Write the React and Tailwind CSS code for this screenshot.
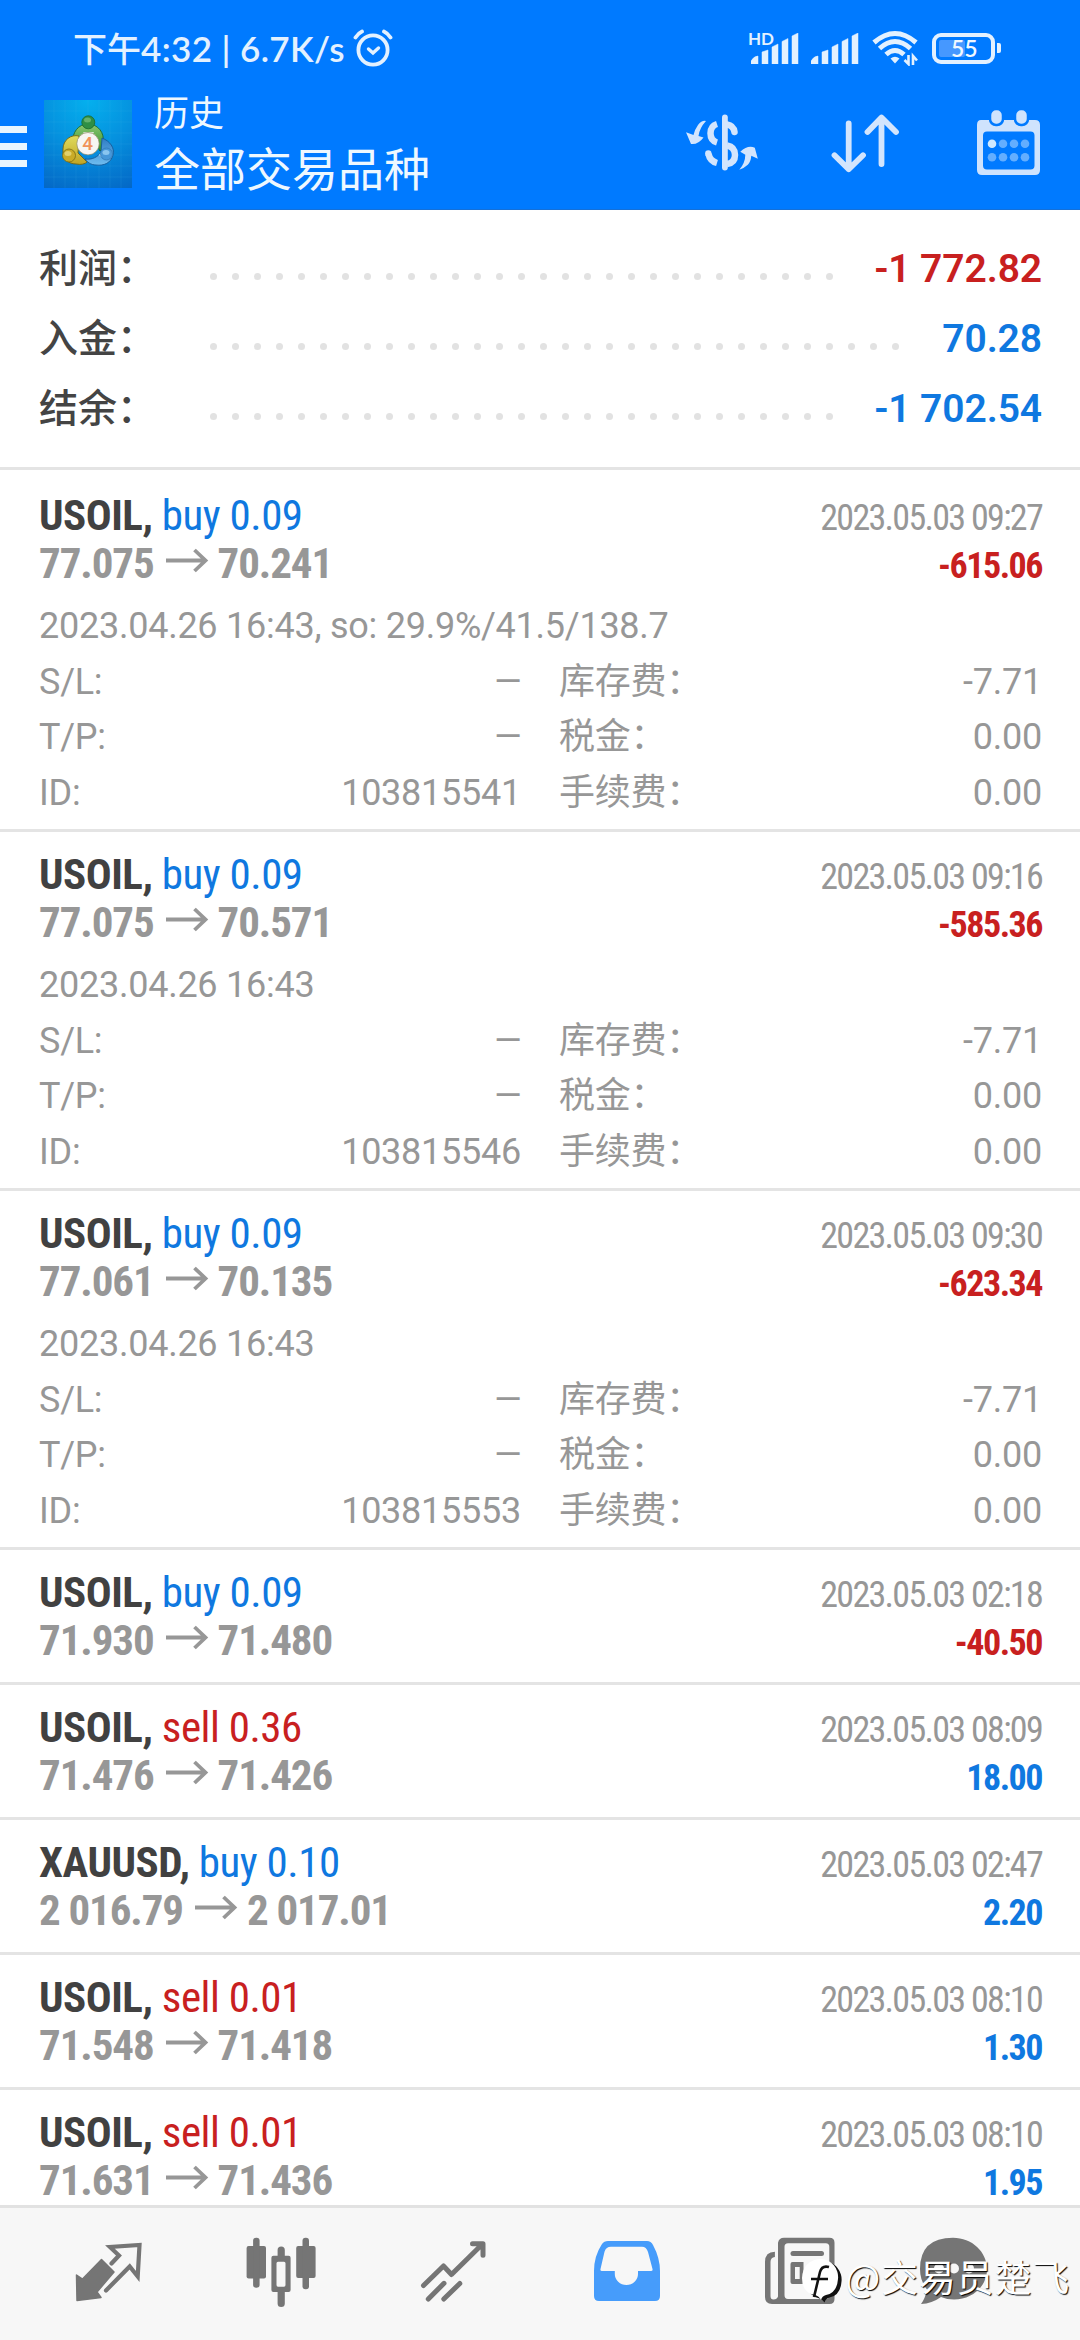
const SUMMARY = [
  { label: '利润：', value: '-1 772.82', dots: 29, tone: 'text-[#c8201f]' },
  { label: '入金：', value: '70.28', dots: 32, tone: 'text-[#0f78e0]' },
  { label: '结余：', value: '-1 702.54', dots: 29, tone: 'text-[#0f78e0]' },
];

const DEALS = [
  {
    symbol: 'USOIL',
    side: 'buy',
    volume: '0.09',
    open: '77.075',
    close: '70.241',
    closedAt: '2023.05.03 09:27',
    profit: '-615.06',
    details: { openedAt: '2023.04.26 16:43, so: 29.9%/41.5/138.7', id: '103815541', swap: '-7.71' },
  },
  {
    symbol: 'USOIL',
    side: 'buy',
    volume: '0.09',
    open: '77.075',
    close: '70.571',
    closedAt: '2023.05.03 09:16',
    profit: '-585.36',
    details: { openedAt: '2023.04.26 16:43', id: '103815546', swap: '-7.71' },
  },
  {
    symbol: 'USOIL',
    side: 'buy',
    volume: '0.09',
    open: '77.061',
    close: '70.135',
    closedAt: '2023.05.03 09:30',
    profit: '-623.34',
    details: { openedAt: '2023.04.26 16:43', id: '103815553', swap: '-7.71' },
  },
  { symbol: 'USOIL', side: 'buy', volume: '0.09', open: '71.930', close: '71.480', closedAt: '2023.05.03 02:18', profit: '-40.50' },
  { symbol: 'USOIL', side: 'sell', volume: '0.36', open: '71.476', close: '71.426', closedAt: '2023.05.03 08:09', profit: '18.00' },
  { symbol: 'XAUUSD', side: 'buy', volume: '0.10', open: '2 016.79', close: '2 017.01', closedAt: '2023.05.03 02:47', profit: '2.20' },
  { symbol: 'USOIL', side: 'sell', volume: '0.01', open: '71.548', close: '71.418', closedAt: '2023.05.03 08:10', profit: '1.30' },
  { symbol: 'USOIL', side: 'sell', volume: '0.01', open: '71.631', close: '71.436', closedAt: '2023.05.03 08:10', profit: '1.95' },
];

function AlarmIcon() {
  return (
    <svg width="40" height="38" viewBox="0 0 40 38" fill="none" stroke="#e3f1ff" strokeWidth="3.8" strokeLinecap="round">
      <circle cx="20" cy="21" r="14.6" />
      <path d="M15.5 20l4.5 4 5.5-5" strokeWidth="3.4" />
      <path d="M2.5 8.5q3-4.5 6.5-6M37.5 8.5q-3-4.5-6.5-6" />
    </svg>
  );
}

function SignalIcon() {
  return (
    <svg width="48" height="31" viewBox="0 0 48 31" fill="#e3f1ff">
      <path d="M0 31v-3q3-5 7-5v8zM11 31V19l6-2v14zM21 31V14l6-3v20zM31 31V8.500l6-3V31zM41 31V3l6-3v31z" stroke="#e3f1ff" strokeWidth="0.500" strokeLinejoin="round" />
    </svg>
  );
}

function WifiIcon() {
  return (
    <svg width="48" height="36" viewBox="0 0 48 36" fill="none" stroke="#e3f1ff" strokeWidth="5">
      <path d="M2 12.500Q23 -5.500 44 12.500" />
      <path d="M7.500 18.500Q23 4.500 38.500 18.500" />
      <path d="M14 24.500Q23 16.500 32 24.500" />
      <path d="M23 33.500l-4.500-5q4.500-3.500 9 0z" fill="#e3f1ff" stroke="none" />
      <path d="M36.500 25v9l-4-4M41 35v-9l4 4.500" strokeWidth="2.600" />
    </svg>
  );
}

function Battery({ level }) {
  return (
    <div className="flex items-center gap-[2px]">
      <div className="relative flex h-[31px] w-[63px] items-center rounded-[9px] border-[4px] border-[#e3f1ff]">
        <div className="ml-[3px] h-[17px] w-[26px] rounded-[2px] bg-[#4698ff]" />
        <span className="absolute left-[15px] top-[-2px] font-['Lato',sans-serif] text-[23px] font-semibold leading-[26px] text-[#f0f8ff]">{level}</span>
      </div>
      <div className="h-[10px] w-[4px] rounded-r-[2px] bg-[#e3f1ff]" />
    </div>
  );
}

function AppLogo() {
  return (
    <svg width="88" height="88" viewBox="0 0 88 88">
      <defs>
        <radialGradient id="sky" cx="0.5" cy="0" r="1.1">
          <stop offset="0" stopColor="#04b0ee" />
          <stop offset="0.5" stopColor="#0590de" />
          <stop offset="1" stopColor="#0468c6" />
        </radialGradient>
        <linearGradient id="green" x1="0" y1="0" x2="0" y2="1">
          <stop offset="0" stopColor="#8cc870" />
          <stop offset="1" stopColor="#2f8f2e" />
        </linearGradient>
        <linearGradient id="yellow" x1="0" y1="0" x2="0" y2="1">
          <stop offset="0" stopColor="#dfdb5c" />
          <stop offset="1" stopColor="#c0a424" />
        </linearGradient>
        <linearGradient id="blue" x1="0" y1="0" x2="0" y2="1">
          <stop offset="0" stopColor="#2f7dc4" />
          <stop offset="1" stopColor="#6fbdf0" />
        </linearGradient>
      </defs>
      <rect width="88" height="88" fill="url(#sky)" />
      <path d="M10 0v88M21 0v88M32 0v88M44 0v88M55 0v88M66 0v88M77 0v88M0 11h88M0 22h88M0 33h88M0 44h88M0 55h88M0 66h88M0 77h88" stroke="#5cc6f5" strokeOpacity="0.15" strokeWidth="0.8" />
      <path d="M29 42c-1-9 5-18 15-18s17 9 15 19c0 4-1 7-3 8l-9-16h-7l-7 9z" fill="url(#green)" stroke="#1c6a2a" strokeWidth="0.900" />
      <path d="M35 36c-8-2-16 4-16 13-1 9 5 15 13 15 5 1 9 0 11-2l-9-9z" fill="url(#yellow)" stroke="#6f6413" strokeWidth="0.900" />
      <path d="M58 38c8 3 13 10 11 17-2 8-9 11-17 10-5 0-9-3-11-6 7 1 13-2 16-7z" fill="url(#blue)" stroke="#155a98" strokeWidth="0.900" />
      <path d="M39 32h11l-2 4h-6zM55 55l4-5 1 9z" fill="#f2f6f4" opacity="0.8" />
      <circle cx="44.300" cy="22.300" r="6.500" fill="#2f8f45" stroke="#1c6a2a" strokeWidth="0.800" />
      <ellipse cx="43.500" cy="20" rx="3.500" ry="2.500" fill="#7cc07f" opacity="0.7" />
      <circle cx="25" cy="55.500" r="6.500" fill="#c9ab27" stroke="#7c6c14" strokeWidth="0.800" />
      <ellipse cx="24" cy="53.500" rx="3.500" ry="2.500" fill="#ece08a" opacity="0.7" />
      <circle cx="62.500" cy="54" r="6" fill="#4797d8" stroke="#2f78b8" strokeWidth="0.800" />
      <ellipse cx="62" cy="52.500" rx="3.500" ry="2.500" fill="#a5d8fa" opacity="0.7" />
      <circle cx="44" cy="43.700" r="11.200" fill="#f7f6f2" stroke="#8d8a63" strokeWidth="0.700" />
      <text x="43.700" y="50.200" textAnchor="middle" fontFamily="Roboto, sans-serif" fontWeight="500" fontSize="19" fill="#f0935a">
        4
      </text>
    </svg>
  );
}

function CurrencyIcon() {
  return (
    <svg width="76" height="62" viewBox="0 0 76 62" fill="none" stroke="#d3e5fd" strokeWidth="6.500">
      <path d="M40.900 5.500v50" strokeLinecap="round" strokeWidth="5.800" />
      <path d="M33 12q-6.500 2-6.500 9.300T33 30.500" />
      <path d="M43 12.500q6.500 1 7.500 7.500" strokeLinecap="round" />
      <path d="M43 33.500q8 1.500 8 9.500t-8 9" />
      <path d="M24.500 42q1.500 7 8.500 9" />
      <circle cx="24.300" cy="41.500" r="3.200" fill="#d3e5fd" stroke="none" />
      <path d="M22 9q-4-1-8 4-3 4-4.500 10L2 20.300l5 11.700q7 1 12.500-6.500l-5-1.500q1-8 7.500-15z" fill="#d3e5fd" stroke="none" />
      <path d="M55.300 57.700q4-1 8.500-5 3-3 3.500-9l6.500 3-3-11q-7-3-14.500 4l5 3q0 8-6 15z" fill="#d3e5fd" stroke="none" />
    </svg>
  );
}

function SortIcon() {
  return (
    <svg width="72" height="64" viewBox="0 0 72 64" fill="none" stroke="#d3e5fd" strokeWidth="5.800" strokeLinecap="round">
      <path d="M20.700 11.500V57M6.500 43.300l14.200 14 14.300-14" strokeLinejoin="round" />
      <path d="M53.500 52V6M39.500 20l14-14.500L68 20" strokeLinejoin="round" />
    </svg>
  );
}

function CalendarIcon() {
  return (
    <svg width="66" height="68" viewBox="0 0 66 68">
      <path fillRule="evenodd" fill="#cfe3fd" d="M5 12h54q5 0 5 5v45q0 5-5 5H6q-5 0-5-5V17q0-5 4-5zM11 23.500q-4 0-4 4v30q0 4 4 4h43.500q4 0 4-4v-30q0-4-4-4z" />
      <rect x="14" y="1" width="13" height="16" rx="6" fill="#cfe3fd" stroke="#007aff" strokeWidth="2.500" />
      <rect x="39" y="1" width="13" height="16" rx="6" fill="#cfe3fd" stroke="#007aff" strokeWidth="2.500" />
      {[16, 27, 38, 49].map((x) =>
        [35.7, 49.2].map((y) => (
          <circle key={`${x}-${y}`} cx={x} cy={y} r="4.300" fill="#cfe9ff" opacity={x === 16 && y < 40 ? 1 : 0.48} />
        ))
      )}
    </svg>
  );
}

function QuotesIcon() {
  return (
    <svg width="72" height="72" viewBox="0 0 72 72">
      <path d="M4.500 38l6 4 19-19.500 12.500 12.500-17 20 4 5.500L5 63.500z" fill="#757575" stroke="#757575" strokeWidth="1.500" strokeLinejoin="round" />
      <path d="M39.500 26.500l7.500-8-9-8.500 29.500-2-1.800 31.500-8-10L34 53.500" fill="none" stroke="#757575" strokeWidth="4.200" strokeLinecap="round" />
    </svg>
  );
}

function ChartIcon() {
  return (
    <svg width="72" height="72" viewBox="0 0 72 72" fill="#757575">
      <rect x="1.600" y="9" width="19.400" height="32.500" rx="2" />
      <rect x="8.100" y="0.700" width="6.500" height="50" rx="3" />
      <path fillRule="evenodd" d="M28.400 18.700h15.200a2 2 0 012 2V53a2 2 0 01-2 2H28.400a2 2 0 01-2-2V20.700a2 2 0 012-2zM33 24.700q-1.500 0-1.500 1.500V48q0 1.700 1.500 1.700h6q1.500 0 1.500-1.700V26.200q0-1.500-1.500-1.500z" />
      <path d="M32.600 20v-7a3.600 3.600 0 017.200 0v7zM32.600 54v12.500a3.600 3.600 0 007.200 0V54z" />
      <rect x="51.200" y="9" width="19.400" height="32" rx="2" />
      <rect x="57.500" y="0.700" width="6.500" height="51.500" rx="3" />
    </svg>
  );
}

function TradeIcon() {
  return (
    <svg width="72" height="72" viewBox="0 0 72 72" fill="none" stroke="#757575" strokeWidth="5" strokeLinecap="round" strokeLinejoin="round">
      <path d="M5.500 48.500l20-19.500 8 8.500L64 7.500M54.500 6.700h10.500v11.500" />
      <path d="M10.300 62L26 46.300M25.800 62l16-15.500" />
    </svg>
  );
}

function InboxIcon() {
  return (
    <svg width="72" height="72" viewBox="0 0 72 72">
      <path
        fillRule="evenodd"
        fill="#469cfb"
        d="M17 4h39q4 0 6 4 7 13 7 26v25q0 5-5 5H8q-5 0-5-5V34Q3 19 11 7q2-3 6-3zM20 9.700q-5 0-6.500 5L9.500 32q-.5 2 1.500 2h12.800v3a11.600 11 0 0023.200 0v-3H60q2 0 1.500-2L57 15q-1.700-5.300-6-5.300z"
      />
    </svg>
  );
}

function NewsIcon() {
  return (
    <svg width="72" height="72" viewBox="0 0 72 72" fill="#757575">
      <path fillRule="evenodd" d="M20 .7h45.500q5 0 5 5V62q0 5-5 5H8q-7 0-7-7V25Q1 14.700 10.900 14.700V20Q6.500 20.500 6.500 25v34q0 3.500 3 3.500 3.500 0 4.500-3V5.700Q15 .7 20 .7zM24 6.300q-3.500 0-3.500 3.500V58q0 4 3.500 4h37.800q3.500 0 3.500-4V9.800q0-3.500-3.500-3.500z" />
      <rect x="26.500" y="14" width="33.500" height="5" rx="2.500" />
      <path fillRule="evenodd" d="M28.500 25h11V47h-11q-2 0-2-2V27q0-2 2-2zM31 30v12h4.700V30z" />
      <rect x="42" y="31" width="18" height="4" rx="2" />
      <rect x="42" y="41.500" width="18" height="4.500" rx="2" />
    </svg>
  );
}

function ChatIcon() {
  return (
    <svg width="72" height="72" viewBox="0 0 72 72">
      <path d="M36 .7c19 0 34 14 34 31.500S55 62.500 37 62.500q-7 0-13-2.500-9 6.500-20 7 4-5 6-14.500Q3 44 3 32 3 .7 36 .7z" fill="#757575" />
      <circle cx="22" cy="31.500" r="5" fill="#f7f7f7" />
      <circle cx="37" cy="31.500" r="5" fill="#f7f7f7" />
      <circle cx="52" cy="31.500" r="5" fill="#f7f7f7" />
    </svg>
  );
}

function Header() {
  return (
    <header className="h-[210px] shrink-0 overflow-hidden border-b border-[#1570d8] bg-[#007aff]">
      <div className="flex h-[88px] items-center pl-[73px] pr-[79px] pt-2 text-[#e3f1ff]">
        <div className="flex items-baseline whitespace-pre font-['Lato','Noto_Sans_CJK_SC',sans-serif] leading-[48px]">
          <span className="text-[34px] font-medium">下午</span>
          <span className="text-[35px] font-semibold tracking-[0.4px]">4:32 | 6.7K/s</span>
        </div>
        <div className="ml-[8px]">
          <AlarmIcon />
        </div>
        <div className="ml-auto flex items-center">
          <div className="relative">
            <span className="absolute left-[-3px] top-[-4px] font-['Lato',sans-serif] text-[17px] font-bold leading-[20px]">HD</span>
            <SignalIcon />
          </div>
          <div className="ml-3">
            <SignalIcon />
          </div>
          <div className="ml-[13px]">
            <WifiIcon />
          </div>
          <div className="ml-[12px]">
            <Battery level="55" />
          </div>
        </div>
      </div>

      <div className="flex h-[122px] items-start">
        <div className="mt-[38px] flex flex-col gap-[10px]">
          <div className="h-[7px] w-[27px] bg-[#e8f5ff]" />
          <div className="h-[7px] w-[27px] bg-[#e8f5ff]" />
          <div className="h-[7px] w-[27px] bg-[#e8f5ff]" />
        </div>
        <div className="ml-[17px] mt-3">
          <AppLogo />
        </div>
        <div className="ml-[22px] font-['Noto_Sans_CJK_SC',sans-serif] text-[#eef8ff]">
          <div className="text-[35px] leading-[46px]">历史</div>
          <div className="mt-px text-[46px] leading-[62px]">全部交易品种</div>
        </div>
        <div className="ml-auto mr-[38px] mt-5 flex items-start">
          <div className="mt-1">
            <CurrencyIcon />
          </div>
          <div className="ml-[68px] mt-1">
            <SortIcon />
          </div>
          <div className="ml-[76px]">
            <CalendarIcon />
          </div>
        </div>
      </div>
    </header>
  );
}

function Summary() {
  return (
    <section className="h-[260px] shrink-0 border-b-[3px] border-[#e4e4e4] pl-[39px] pr-[38px] pt-[24px]">
      {SUMMARY.map((row) => (
        <div key={row.label} className="flex h-[70px] items-center text-[39px] font-medium leading-[70px]">
          <span className="w-[164px] whitespace-nowrap text-[#444444]">{row.label}</span>
          <span className="mt-[14px] flex gap-[15px] pl-[7px]">
            {Array.from({ length: row.dots }, (_, i) => (
              <i key={i} className="size-[7px] rounded-full bg-[#e2e2e2]" />
            ))}
          </span>
          <span className={`ml-auto whitespace-nowrap font-semibold tracking-[-0.1px] ${row.tone}`}>{row.value}</span>
        </div>
      ))}
    </section>
  );
}

function Details({ openedAt, id, swap }) {
  const rows = [
    ['S/L:', '–', '库存费：', swap],
    ['T/P:', '–', '税金：', '0.00'],
    ['ID:', id, '手续费：', '0.00'],
  ];
  return (
    <div className="mt-[12px] text-[36px] leading-[55.5px] tracking-[-0.25px] text-[#979797]">
      <div>{openedAt}</div>
      {rows.map(([label, value, feeLabel, fee]) => (
        <div key={label} className="flex">
          <span>{label}</span>
          <span className={value === '–' ? 'ml-auto origin-right translate-x-[2px] scale-x-130' : 'ml-auto'}>{value}</span>
          <span className="ml-[38px] flex w-[483px] justify-between">
            <span>{feeLabel}</span>
            <span>{fee}</span>
          </span>
        </div>
      ))}
    </div>
  );
}

function Deal({ deal }) {
  const loss = deal.profit.startsWith('-');
  return (
    <article className={`shrink-0 border-b-[3px] border-[#e4e4e4] pl-[39px] pr-[38px] pt-[18px] ${deal.details ? 'h-[359px]' : 'h-[135px]'}`}>
      <div className="flex h-12 items-baseline justify-between font-stretch-75% leading-[48px]">
        <div className="text-[43px] tracking-[-0.5px]">
          <span className="font-bold text-[#414141]">{deal.symbol},</span>{' '}
          <span className={deal.side === 'buy' ? 'text-[#0f78e0]' : 'text-[#c8201f]'}>
            {deal.side} {deal.volume}
          </span>
        </div>
        <div className="text-[36px] tracking-[-1.7px] text-[#979797]">{deal.closedAt}</div>
      </div>
      <div className="flex h-12 items-baseline justify-between font-bold font-stretch-75% leading-[48px]">
        <div className="flex items-baseline text-[43px] tracking-[-1.1px] text-[#979797]">
          {deal.open}
          <svg className="ml-[12px] mr-[9px]" width="43" height="30" viewBox="0 0 43 30" fill="none" stroke="#979797" strokeWidth="3.800">
            <path d="M0 12.500h40M28.500 2l11 10.500-11 10.500" />
          </svg>
          {deal.close}
        </div>
        <div className={`text-[36px] tracking-[-1.5px] ${loss ? 'text-[#c8201f]' : 'text-[#0f78e0]'}`}>{deal.profit}</div>
      </div>
      {deal.details && <Details {...deal.details} />}
    </article>
  );
}

function TabBar() {
  return (
    <nav className="flex h-[135px] shrink-0 border-t-[3px] border-[#e2e2e2] bg-[#f7f7f7] pl-[72px] pt-[29px]">
      <div className="flex gap-[101px]">
        <QuotesIcon />
        <ChartIcon />
        <TradeIcon />
        <InboxIcon />
        <NewsIcon />
      </div>
      <div className="ml-[81px]">
        <ChatIcon />
      </div>
    </nav>
  );
}

function Watermark() {
  return (
    <div className="absolute bottom-[37px] right-[10px] flex items-center">
      <svg width="44" height="46" viewBox="0 0 44 46">
        <path d="M22 3a18 18 0 0116 20q-1 14-12 16-4 1-5 5-2-3-5-4Q3 37 3 22 4 4 22 3z" fill="#111" transform="translate(2.500 1.500)" />
        <path d="M20 2a18 18 0 0117 20q-1 14-12 16-4 1-5 5-2-4-6-5Q1 36 1 21 2 3 20 2z" fill="#fff" />
        <path d="M28 10q-7-2-9 5l-6 25M10 22h17" fill="none" stroke="#111" strokeWidth="2.600" />
      </svg>
      <span className="-mt-[8px] font-['Noto_Sans_CJK_SC',sans-serif] text-[37px] leading-[50px] tracking-[0.8px] text-white [text-shadow:1px_1px_1px_#000]">
        @交易员楚飞
      </span>
    </div>
  );
}

export default function App() {
  return (
    <div className="relative flex h-[2340px] w-[1080px] flex-col overflow-hidden bg-white font-['Roboto','Noto_Sans_CJK_SC',sans-serif]">
      <Header />
      <Summary />
      <main className="flex min-h-0 flex-1 flex-col overflow-hidden pt-[3px]">
        {DEALS.map((deal, i) => (
          <Deal key={i} deal={deal} />
        ))}
      </main>
      <TabBar />
      <Watermark />
    </div>
  );
}
